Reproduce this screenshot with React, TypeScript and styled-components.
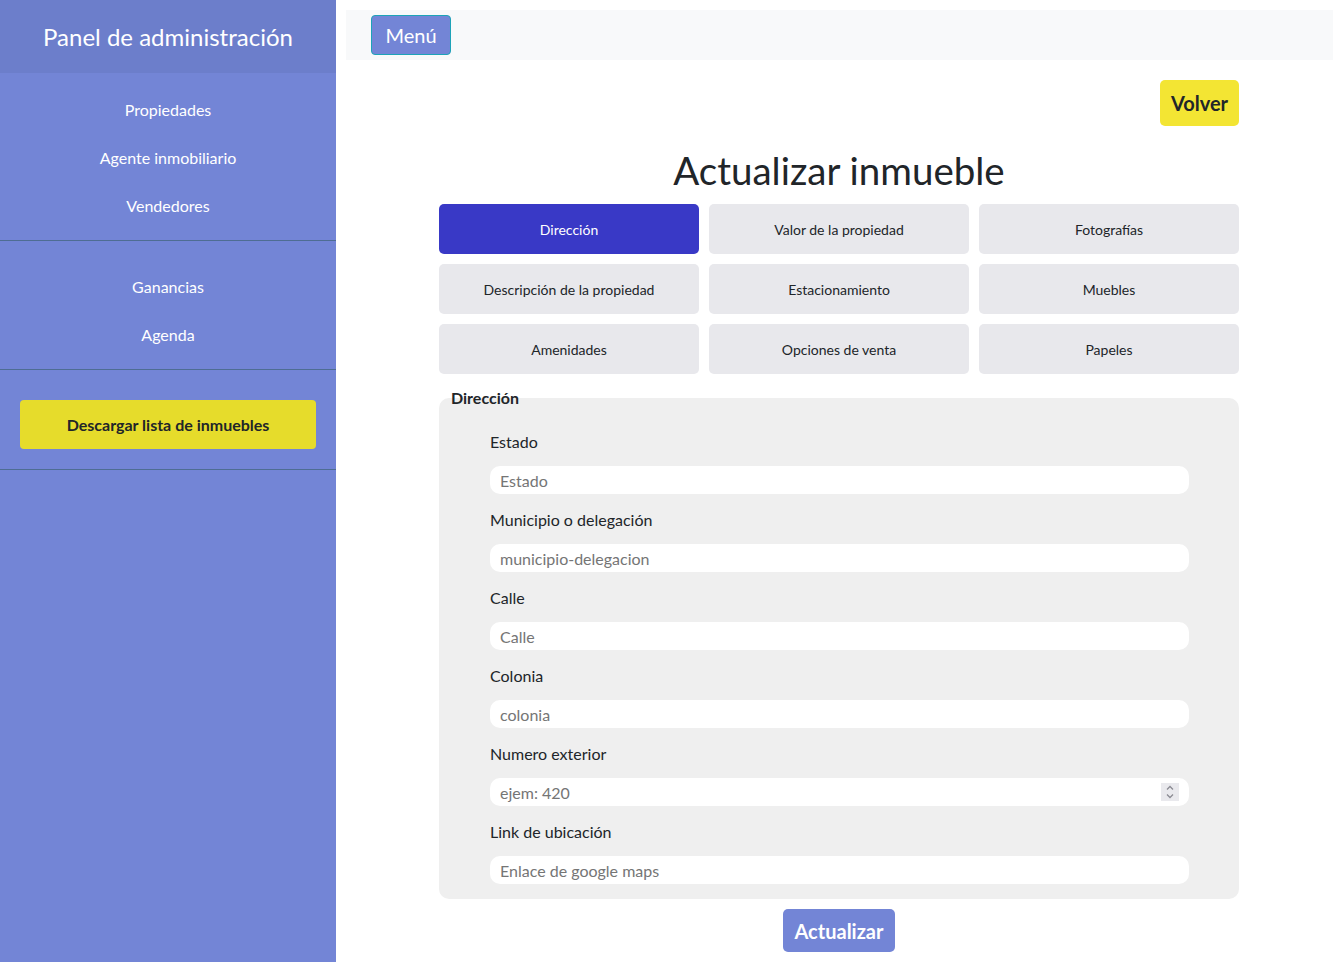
import React from "react";
import styled, { createGlobalStyle } from "styled-components";

const Global = createGlobalStyle`
  html, body { margin: 0; padding: 0; }
  body { font-family: Lato, "Open Sans", sans-serif; color: #212529; background: #fff; }
  * { box-sizing: border-box; }
`;

const Layout = styled.div`
  display: flex;
  min-height: 962px;
`;

const Sidebar = styled.aside`
  width: 336px;
  flex: 0 0 336px;
  background: #7385d6;
  display: flex;
  flex-direction: column;
`;

const SideHeader = styled.div`
  height: 73px;
  background: #6c7ecb;
  display: flex;
  align-items: center;
  justify-content: center;
  color: #fff;
  font-size: 24px;
`;

const NavGroup = styled.nav<{ $top: number; $bottom: number }>`
  display: flex;
  flex-direction: column;
  padding: ${(p) => p.$top}px 0 ${(p) => p.$bottom}px;
  border-bottom: 1px solid #4e6d93;
`;

const NavItem = styled.a`
  height: 48px;
  display: flex;
  align-items: center;
  justify-content: center;
  color: #fff;
  font-size: 16px;
  text-decoration: none;
`;

const DownloadSection = styled.div`
  padding: 30px 20px 20px;
  border-bottom: 1px solid #4e6d93;
`;

const DownloadButton = styled.button`
  width: 100%;
  height: 49px;
  border: none;
  border-radius: 4px;
  background: #e6dc2b;
  color: #212529;
  font-family: Lato, sans-serif;
  font-size: 16px;
  font-weight: 700;
`;

const Main = styled.main`
  flex: 1;
  padding: 10px;
  display: flex;
  flex-direction: column;
`;

const TopBar = styled.div`
  height: 50px;
  background: #f8f9fa;
  display: flex;
  align-items: center;
  padding-left: 25px;
`;

const MenuButton = styled.button`
  width: 80px;
  height: 40px;
  background: #7385d6;
  border: 1px solid #1da3b8;
  border-radius: 4px;
  color: #fff;
  font-family: Lato, sans-serif;
  font-size: 20px;
`;

const Content = styled.div`
  width: 801px;
  padding-right: 1px;
  margin: 0 auto;
  display: flex;
  flex-direction: column;
`;

const BackRow = styled.div`
  display: flex;
  justify-content: flex-end;
  margin-top: 20px;
`;

const BackButton = styled.button`
  width: 79px;
  height: 46px;
  border: none;
  border-radius: 5px;
  background: #f3e533;
  color: #212529;
  font-family: Lato, sans-serif;
  font-size: 20px;
  font-weight: 700;
`;

const Title = styled.h1`
  margin: 20px 0 10px;
  text-align: center;
  font-size: 38.5px;
  font-weight: 400;
  line-height: 48px;
  color: #212529;
`;

const TabGrid = styled.div`
  display: grid;
  grid-template-columns: repeat(3, 1fr);
  gap: 10px;
`;

const Tab = styled.button<{ $active?: boolean }>`
  height: 50px;
  border: none;
  border-radius: 5px;
  background: ${(p) => (p.$active ? "#3939c6" : "#e8e8ec")};
  color: ${(p) => (p.$active ? "#fff" : "#212529")};
  font-family: Lato, sans-serif;
  font-size: 14px;
`;

const Fieldset = styled.fieldset`
  margin: 14px 0 0;
  border: none;
  border-radius: 10px;
  background: #efefef;
  padding: 24px 50px 15px 51px;
  min-width: 0;
`;

const Legend = styled.legend`
  padding: 0;
  margin-left: -39px;
  font-size: 16px;
  font-weight: 700;
  line-height: 20px;
`;

const Field = styled.div`
  display: flex;
  flex-direction: column;
  & + & {
    margin-top: 16px;
  }
`;

const Label = styled.label`
  font-size: 16px;
  line-height: 20px;
  margin-bottom: 14px;
`;

const InputWrap = styled.div`
  position: relative;
  display: flex;
  flex-direction: column;
`;

const Input = styled.input`
  height: 28px;
  border: none;
  border-radius: 10px;
  background: #fff;
  padding: 0 10px;
  font-family: Lato, sans-serif;
  font-size: 16px;
  color: #212529;
  outline: none;
  -moz-appearance: textfield;
  &::placeholder { color: #757575; }
  &::-webkit-inner-spin-button,
  &::-webkit-outer-spin-button {
    -webkit-appearance: none;
    margin: 0;
  }
`;

const Spinner = styled.span`
  position: absolute;
  right: 10px;
  top: 5px;
  width: 18px;
  height: 18px;
  background: #e9e9ed;
  display: flex;
  align-items: center;
  justify-content: center;
`;

const SubmitRow = styled.div`
  display: flex;
  justify-content: center;
  margin-top: 10px;
`;

const SubmitButton = styled.button`
  width: 112px;
  height: 43px;
  border: none;
  border-radius: 5px;
  background: #7385d6;
  color: #fff;
  font-family: Lato, sans-serif;
  font-size: 20px;
  font-weight: 700;
`;

const tabs = [
  "Dirección",
  "Valor de la propiedad",
  "Fotografías",
  "Descripción de la propiedad",
  "Estacionamiento",
  "Muebles",
  "Amenidades",
  "Opciones de venta",
  "Papeles",
];

const fields: { label: string; placeholder: string; type?: string }[] = [
  { label: "Estado", placeholder: "Estado" },
  { label: "Municipio o delegación", placeholder: "municipio-delegacion" },
  { label: "Calle", placeholder: "Calle" },
  { label: "Colonia", placeholder: "colonia" },
  { label: "Numero exterior", placeholder: "ejem: 420", type: "number" },
  { label: "Link de ubicación", placeholder: "Enlace de google maps" },
];

const SpinIcon = () => (
  <svg width="12" height="16" viewBox="0 0 12 16" fill="none" stroke="#8b8b93" strokeWidth="1.3">
    <path d="M3 5.5 L6 2.5 L9 5.5" />
    <path d="M3 10.5 L6 13.5 L9 10.5" />
  </svg>
);

export default function App() {
  return (
    <>
      <Global />
      <Layout>
        <Sidebar>
          <SideHeader>Panel de administración</SideHeader>
          <NavGroup $top={12} $bottom={11}>
            <NavItem>Propiedades</NavItem>
            <NavItem>Agente inmobiliario</NavItem>
            <NavItem>Vendedores</NavItem>
          </NavGroup>
          <NavGroup $top={21} $bottom={11}>
            <NavItem>Ganancias</NavItem>
            <NavItem>Agenda</NavItem>
          </NavGroup>
          <DownloadSection>
            <DownloadButton>Descargar lista de inmuebles</DownloadButton>
          </DownloadSection>
        </Sidebar>
        <Main>
          <TopBar>
            <MenuButton>Menú</MenuButton>
          </TopBar>
          <Content>
            <BackRow>
              <BackButton>Volver</BackButton>
            </BackRow>
            <Title>Actualizar inmueble</Title>
            <TabGrid>
              {tabs.map((t, i) => (
                <Tab key={t} $active={i === 0}>
                  {t}
                </Tab>
              ))}
            </TabGrid>
            <Fieldset>
              <Legend>Dirección</Legend>
              {fields.map((f) => (
                <Field key={f.label}>
                  <Label>{f.label}</Label>
                  <InputWrap>
                    <Input type={f.type || "text"} placeholder={f.placeholder} />
                    {f.type === "number" && (
                      <Spinner>
                        <SpinIcon />
                      </Spinner>
                    )}
                  </InputWrap>
                </Field>
              ))}
            </Fieldset>
            <SubmitRow>
              <SubmitButton>Actualizar</SubmitButton>
            </SubmitRow>
          </Content>
        </Main>
      </Layout>
    </>
  );
}
